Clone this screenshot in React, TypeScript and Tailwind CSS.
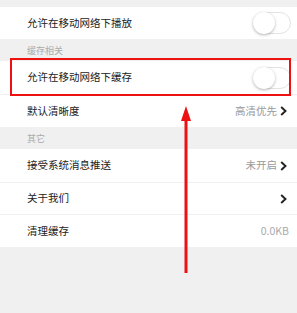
import React from "react";

const font = { fontFamily: '"Noto Sans CJK SC", "Noto Sans", sans-serif' };

function Toggle() {
  return (
    <div className="relative w-[38px] h-[22px] rounded-full border border-[#e3e3e3] bg-white">
      <div className="absolute left-[-1px] top-[-1px] w-[22px] h-[22px] rounded-full bg-white shadow-[0_1px_3px_rgba(0,0,0,0.3)]" />
    </div>
  );
}

function Chevron() {
  return (
    <svg width="7" height="10" viewBox="0 0 7 10" className="ml-[3px] mr-[4px]">
      <polyline points="1.2,1 5.5,5 1.2,9" fill="none" stroke="#222" strokeWidth="1.9" />
    </svg>
  );
}

function Row({ label, children, h = "h-[33px]", border = true }: { label: string; children?: React.ReactNode; h?: string; border?: boolean }) {
  return (
    <div className={`flex items-center justify-between bg-white pl-[27px] pr-[6px] ${h} ${border ? "border-t border-[#f0f0f0]" : ""}`}>
      <span className="text-[10.5px] text-[#222] leading-none">{label}</span>
      <div className="flex items-center">{children}</div>
    </div>
  );
}

function Header({ label }: { label: string }) {
  return (
    <div className="flex items-center h-[22px] pl-[27px] bg-[#f0f0f0]">
      <span className="text-[9px] text-[#aaa] leading-none">{label}</span>
    </div>
  );
}

export default function App() {
  return (
    <div className="relative w-[297px] h-[313px] bg-[#f0f0f0] overflow-hidden" style={font}>
      <div className="h-[7px]" />
      <Row label="允许在移动网络下播放" h="h-[32px]" border={false}>
        <Toggle />
      </Row>
      <Header label="缓存相关" />
      <Row label="允许在移动网络下缓存" border={false}>
        <Toggle />
      </Row>
      <Row label="默认清晰度">
        <span className="text-[10.5px] text-[#999] leading-none">高清优先</span>
        <Chevron />
      </Row>
      <Header label="其它" />
      <Row label="接受系统消息推送" border={false}>
        <span className="text-[10.5px] text-[#999] leading-none">未开启</span>
        <Chevron />
      </Row>
      <Row label="关于我们" h="h-[32px]">
        <Chevron />
      </Row>
      <Row label="清理缓存">
        <span className="text-[10.5px] text-[#aaa] leading-none mr-[2px]">0.0KB</span>
      </Row>

      <div className="absolute left-[10px] top-[58px] w-[281px] h-[38px] border-2 border-[#ee1111]" />
      <svg className="absolute left-[178px] top-[104px]" width="16" height="172" viewBox="0 0 16 172">
        <polygon points="8,2 13,17 3,17" fill="#ee1111" />
        <rect x="6.5" y="15" width="3" height="154" fill="#ee1111" />
      </svg>
    </div>
  );
}
